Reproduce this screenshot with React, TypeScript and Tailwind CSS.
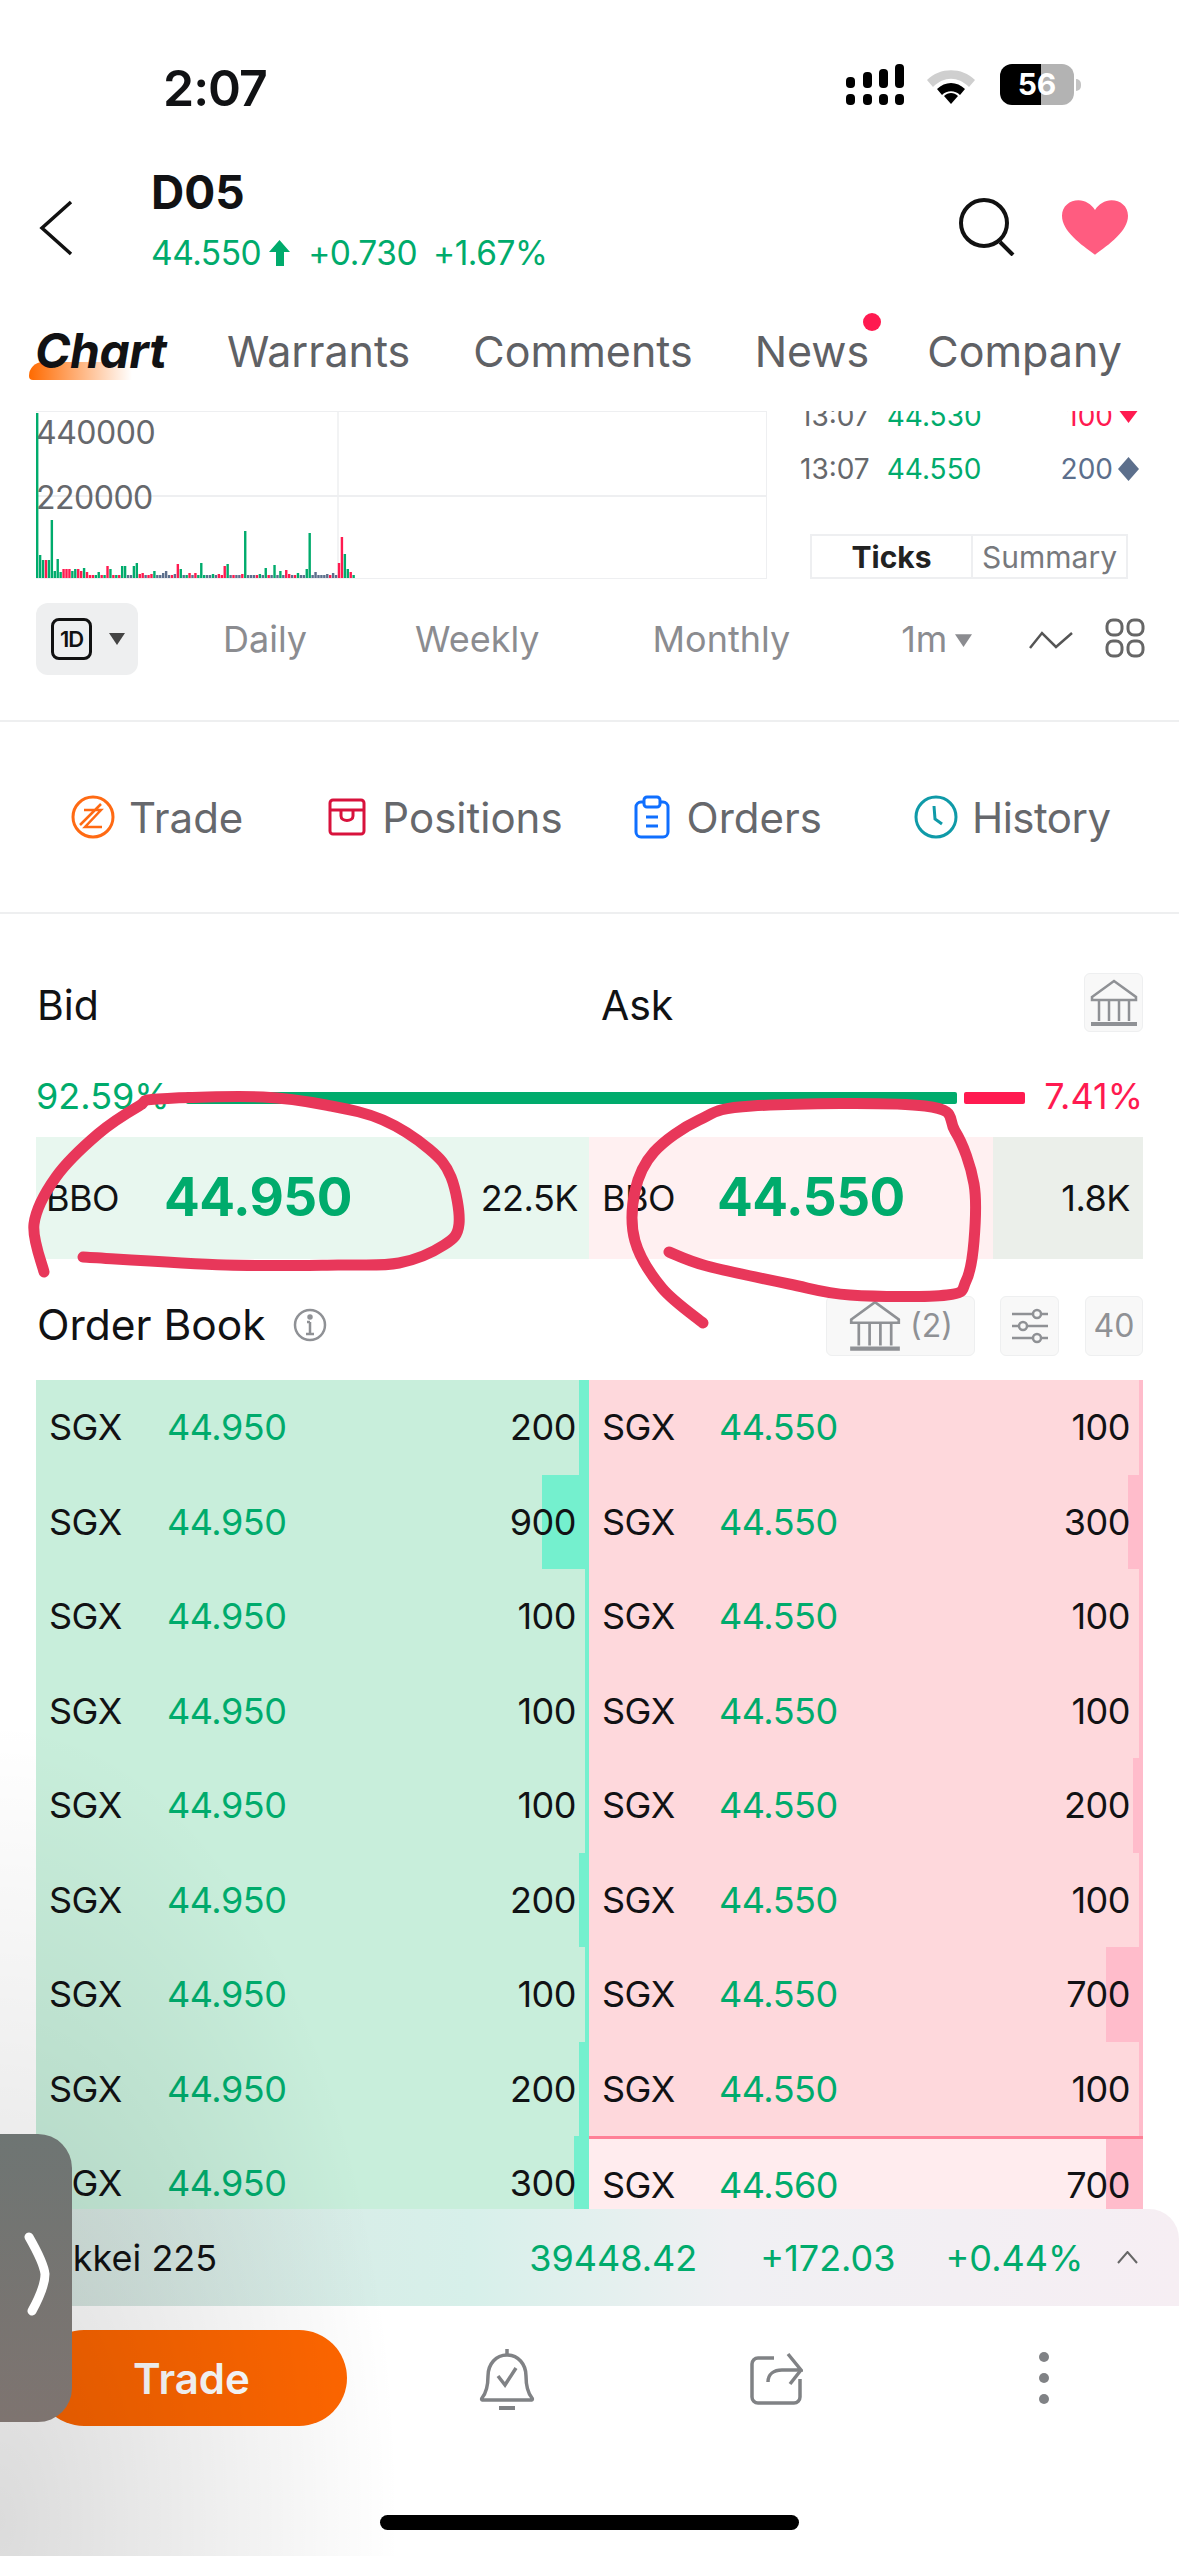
const GREEN = '#00ab6c';
const RED = '#ff1a50';

type Bar = [number, 'g' | 'r' | 's'];

// volume bars, 3px apart starting at the left edge of the chart
const bars: Bar[] = [
  [165, 'g'], [23, 'g'], [18, 'g'], [18, 'r'], [18, 'g'], [58, 'g'], [7, 'g'], [19, 'g'], [6, 'g'], [9, 'r'], [9, 'r'], [9, 'r'],
  [7, 'g'], [9, 'g'], [9, 'r'], [7, 'r'], [10, 'g'], [6, 'r'], [3, 'r'], [3, 'r'], [3, 'g'], [6, 'g'], [3, 'r'], [3, 'g'],
  [12, 'r'], [9, 'g'], [3, 'r'], [3, 'g'], [3, 'r'], [12, 'g'], [12, 'g'], [3, 's'], [3, 's'], [12, 'g'], [15, 'g'], [4, 'r'],
  [5, 'r'], [3, 's'], [3, 'r'], [4, 'r'], [7, 'g'], [3, 's'], [3, 's'], [5, 's'], [7, 's'], [3, 's'], [3, 'r'], [4, 's'],
  [14, 'r'], [9, 'g'], [3, 's'], [3, 'g'], [5, 'r'], [3, 's'], [5, 'r'], [3, 'g'], [15, 'g'], [3, 'g'], [3, 's'], [3, 's'],
  [4, 'g'], [3, 's'], [4, 'r'], [3, 'r'], [12, 'r'], [14, 'g'], [3, 's'], [3, 'r'], [3, 's'], [3, 's'], [4, 'r'], [47, 'g'],
  [3, 's'], [3, 's'], [3, 's'], [3, 'r'], [4, 'g'], [3, 's'], [10, 'g'], [3, 'r'], [3, 's'], [13, 'g'], [3, 's'], [7, 'g'],
  [3, 's'], [8, 'r'], [4, 'r'], [3, 's'], [3, 'r'], [5, 'g'], [3, 's'], [3, 's'], [9, 'g'], [45, 'g'], [3, 's'], [6, 's'], [3, 's'],
  [3, 's'], [3, 's'], [4, 's'], [3, 'r'], [5, 's'], [3, 's'], [15, 'r'], [41, 'r'], [24, 'g'], [9, 'g'], [6, 'r'], [3, 'g'],
];

const barColor = { g: GREEN, r: RED, s: '#5c6f8c' };

const rows = [
  { bidPrice: '44.950', bid: '200', bidBar: 10, askPrice: '44.550', ask: '100', askBar: 4 },
  { bidPrice: '44.950', bid: '900', bidBar: 47, askPrice: '44.550', ask: '300', askBar: 15 },
  { bidPrice: '44.950', bid: '100', bidBar: 4, askPrice: '44.550', ask: '100', askBar: 4 },
  { bidPrice: '44.950', bid: '100', bidBar: 4, askPrice: '44.550', ask: '100', askBar: 4 },
  { bidPrice: '44.950', bid: '100', bidBar: 4, askPrice: '44.550', ask: '200', askBar: 10 },
  { bidPrice: '44.950', bid: '200', bidBar: 10, askPrice: '44.550', ask: '100', askBar: 4 },
  { bidPrice: '44.950', bid: '100', bidBar: 4, askPrice: '44.550', ask: '700', askBar: 37 },
  { bidPrice: '44.950', bid: '200', bidBar: 10, askPrice: '44.550', ask: '100', askBar: 4 },
  { bidPrice: '44.950', bid: '300', bidBar: 15, askPrice: '44.560', ask: '700', askBar: 37 },
];

const leftLoop: [number, number][] = [
  [44, 1272], [34, 1224], [56, 1177], [98, 1134], [139, 1106], [158, 1099], [263, 1097], [331, 1106], [383, 1120],
  [429, 1149], [451, 1177], [459, 1224], [444, 1245], [399, 1263], [338, 1265], [226, 1265], [83, 1257],
];

const rightLoop: [number, number][] = [
  [703, 1323], [662, 1288], [635, 1241], [635, 1191], [654, 1152], [699, 1120], [752, 1106], [925, 1106], [955, 1131],
  [974, 1184], [974, 1241], [966, 1281], [947, 1295], [850, 1295], [789, 1284], [707, 1266], [669, 1252],
];

// catmull-rom through the points of a pen stroke
function smooth(pts: [number, number][]) {
  let d = `M${pts[0][0]} ${pts[0][1]}`;
  for (let i = 0; i < pts.length - 1; i++) {
    const p0 = pts[Math.max(i - 1, 0)];
    const p1 = pts[i];
    const p2 = pts[i + 1];
    const p3 = pts[Math.min(i + 2, pts.length - 1)];
    const c1x = p1[0] + (p2[0] - p0[0]) / 6;
    const c1y = p1[1] + (p2[1] - p0[1]) / 6;
    const c2x = p2[0] - (p3[0] - p1[0]) / 6;
    const c2y = p2[1] - (p3[1] - p1[1]) / 6;
    d += `C${c1x} ${c1y} ${c2x} ${c2y} ${p2[0]} ${p2[1]}`;
  }
  return d;
}

function BankIcon({ className }: { className?: string }) {
  return (
    <svg viewBox="0 0 50 50" fill="none" stroke="#8f9195" strokeWidth="2.5" className={className}>
      <path d="M3 19 25 3l22 16v3H3z" />
      <path d="M10 23v20M20 23v20M30 23v20M40 23v20" />
      <path d="M2 46h46" strokeWidth="4" />
    </svg>
  );
}

function Signal() {
  const cols = [
    { x: 0, top: 13 },
    { x: 17, top: 8 },
    { x: 33, top: 5 },
    { x: 49, top: 0 },
  ];
  return (
    <svg width="58" height="41" viewBox="0 0 58 41">
      {cols.map((c) => (
        <g key={c.x} fill="#000">
          <rect x={c.x} y={c.top} width="9" height={24 - c.top} rx="4" />
          <rect x={c.x} y="30" width="9" height="11" rx="4" />
        </g>
      ))}
    </svg>
  );
}

function Wifi() {
  return (
    <svg width="50" height="38" viewBox="0 0 50 38">
      <path d="M1 14C14 1 36 1 49 14l-6 7C32 10 18 10 7 21z" fill="#cfcfcf" />
      <path d="M11 23c8-8 20-8 28 0l-5 6c-5-5-13-5-18 0z" fill="#000" />
      <path d="m25 38-7-8c4-4 10-4 14 0z" fill="#000" />
    </svg>
  );
}

function Caret({ className }: { className?: string }) {
  return (
    <svg viewBox="0 0 16 12" className={className}>
      <path d="M0 0h16L8 12z" fill="currentColor" />
    </svg>
  );
}

export default function App() {
  return (
    <div
      className="relative w-[1179px] h-[2556px] overflow-hidden bg-white text-[#111214]"
      style={{ fontFamily: 'Inter, "Liberation Sans", sans-serif' }}
    >
      {/* status bar */}
      <div className="h-[150px] pt-[64px] pl-[163px] pr-[98px] flex items-start justify-between">
        <span className="text-[50px] leading-[48px] font-semibold tracking-[-1px]">2:07</span>
        <div className="flex items-center">
          <Signal />
          <div className="ml-[22px]">
            <Wifi />
          </div>
          <div className="ml-[24px] w-[74px] h-[41px] rounded-[12px] bg-[linear-gradient(90deg,#000_0,#000_55%,#b3b3b3_55%,#b3b3b3_100%)] flex items-center justify-center text-white text-[30px] font-bold">
            56
          </div>
          <div className="ml-[2px] w-[5px] h-[12px] rounded-r-full bg-[#c4c4c4]" />
        </div>
      </div>

      {/* header */}
      <div className="h-[140px] flex items-start">
        <svg width="34" height="56" viewBox="0 0 34 56" fill="none" stroke="#111" strokeWidth="3.5" className="ml-[39px] mt-[50px]">
          <path d="M32 2 3 28l29 26" />
        </svg>
        <div className="ml-[78px] mt-[18px]">
          <div className="text-[46px] leading-[48px] font-bold">D05</div>
          <div className="mt-[17px] flex items-center text-[33.5px] leading-[40px] tracking-[-0.5px]" style={{ color: GREEN }}>
            <span>44.550</span>
            <svg width="21" height="26" viewBox="0 0 21 26" className="ml-[8px]">
              <path d="M10.5 0 21 12h-6v14H7V12H0z" fill={GREEN} />
            </svg>
            <span className="ml-[18px]">+0.730</span>
            <span className="ml-[16px]">+1.67%</span>
          </div>
        </div>
        <div className="ml-auto mr-[51px] mt-[48px] flex items-center">
          <svg width="56" height="58" viewBox="0 0 56 58" fill="none" stroke="#111" strokeWidth="4">
            <circle cx="25" cy="25" r="23" />
            <path d="m41 44 13 13" />
          </svg>
          <svg width="66" height="55" viewBox="0 0 68 56" className="ml-[47px]">
            <path
              d="M34 56C20 46 0 32 0 16 0 6 8 0 17 0c7 0 13 4 17 10C38 4 44 0 51 0c9 0 17 6 17 16 0 16-20 30-34 40z"
              fill="#ff5c80"
            />
          </svg>
        </div>
      </div>

      {/* tabs */}
      <div className="relative h-[121px] pt-[35px] pl-[35px] flex items-start text-[43px] leading-[52px] text-[#5f6165]">
        <div className="relative w-[192px]">
          <div className="absolute left-[-6px] top-[37px] w-[103px] h-[18px] rounded-tl-[14px] rounded-bl-[4px] bg-[linear-gradient(90deg,#ff6a00,rgba(255,106,0,0))]" />
          <span className="relative text-[#111214] text-[48px] font-bold italic tracking-[-0.5px]">Chart</span>
        </div>
        <span>Warrants</span>
        <span className="ml-[63px]">Comments</span>
        <span className="relative ml-[62px]">
          News
          <span className="absolute left-[108px] top-[-12px] w-[18px] h-[18px] rounded-full" style={{ backgroundColor: RED }} />
        </span>
        <span className="ml-[58px]">Company</span>
      </div>

      {/* chart and ticks */}
      <div className="h-[168px] flex">
        <div className="relative ml-[36px] w-[731px] h-[168px] border border-l-0 border-[#eeeff1]">
          <div className="absolute left-[301px] top-0 bottom-0 w-[2px] bg-[#f2f3f4]" />
          <div className="absolute left-0 right-0 top-[83px] h-[2px] bg-[#eeeff1]" />
          <span className="absolute left-0 top-[3px] text-[32px] leading-[36px] text-[#66686c] tracking-[-0.5px]">440000</span>
          <span className="absolute left-0 top-[68px] text-[32px] leading-[36px] text-[#66686c] tracking-[-0.5px]">220000</span>
          <svg width="330" height="168" className="absolute left-0 top-0">
            {bars.map(([h, c], i) => (
              <rect key={i} x={i * 2.93} y={166 - h} width="2.4" height={h} fill={barColor[c]} />
            ))}
          </svg>
        </div>
        <div className="relative ml-[33px] w-[346px] h-[168px] overflow-hidden text-[28px] leading-[36px]">
          <div className="absolute top-[-13px] left-0 w-[339px] flex">
            <span className="text-[#66686c]">13:07</span>
            <span className="ml-[17px]" style={{ color: GREEN }}>44.530</span>
            <span className="ml-auto" style={{ color: RED }}>100</span>
            <svg width="21" height="14" viewBox="0 0 21 14" className="ml-[5px] mt-[11px]">
              <path d="M0 0h21L10.5 14z" fill={RED} />
            </svg>
          </div>
          <div className="absolute top-[40px] left-0 w-[339px] flex">
            <span className="text-[#66686c]">13:07</span>
            <span className="ml-[17px]" style={{ color: GREEN }}>44.550</span>
            <span className="ml-auto text-[#5c6f8c]">200</span>
            <svg width="21" height="24" viewBox="0 0 21 24" className="ml-[5px] mt-[6px]">
              <path d="M10.5 0 21 12 10.5 24 0 12z" fill="#5c6f8c" />
            </svg>
          </div>
          <div className="absolute left-[10px] top-[123px] w-[318px] h-[45px] border-2 border-[#eeeff1] flex items-center text-[30px]">
            <span className="w-[159px] text-center font-bold text-[#222]">Ticks</span>
            <span className="flex-1 h-full flex items-center justify-center border-l-2 border-[#eeeff1] text-[#77797d] text-[30px]">Summary</span>
          </div>
        </div>
      </div>

      {/* interval toolbar */}
      <div className="h-[143px] border-b-2 border-[#eeeff0] pt-[24px] pl-[36px] flex items-start text-[36px] leading-[72px] text-[#8b8c90]">
        <div className="w-[102px] h-[72px] rounded-[12px] bg-[#eeeff0] flex items-center pl-[15px]">
          <div className="w-[41px] h-[42px] rounded-[8px] border-[3px] border-[#111] flex items-center justify-center text-[22px] leading-none font-semibold text-[#111] tracking-[-1px]">
            1D
          </div>
          <Caret className="ml-[17px] w-[16px] h-[12px] text-[#444]" />
        </div>
        <span className="ml-[85px]">Daily</span>
        <span className="ml-[108px]">Weekly</span>
        <span className="ml-[113px]">Monthly</span>
        <span className="ml-[111px]">1m</span>
        <Caret className="ml-[8px] mt-[31px] w-[17px] h-[13px] text-[#8b8c90]" />
        <svg width="44" height="18" viewBox="0 0 44 18" fill="none" stroke="#555" strokeWidth="2.5" className="ml-[57px] mt-[28px]">
          <path d="M1 17 13 2l14 14L43 2" />
        </svg>
        <svg width="40" height="40" viewBox="0 0 40 40" fill="none" stroke="#666" strokeWidth="3" className="ml-[32px] mt-[15px]">
          <rect x="2" y="2" width="15" height="15" rx="6" />
          <rect x="23" y="2" width="15" height="15" rx="6" />
          <rect x="2" y="23" width="15" height="15" rx="6" />
          <rect x="23" y="23" width="15" height="15" rx="6" />
        </svg>
      </div>

      {/* trade shortcuts */}
      <div className="h-[192px] border-b-2 border-[#eeeff0] flex items-center pl-[71px] text-[42px] text-[#66686c]">
        <svg width="44" height="44" viewBox="0 0 44 44" fill="none" stroke="#ff6a13" strokeWidth="3">
          <circle cx="22" cy="22" r="20" />
          <path d="M13 15h17L14 32h17M9 30 30 9" strokeWidth="2.5" />
        </svg>
        <span className="ml-[14px]">Trade</span>
        <svg width="38" height="38" viewBox="0 0 38 38" fill="none" stroke="#d8123c" strokeWidth="3" className="ml-[85px]">
          <rect x="2" y="2" width="34" height="34" rx="3" />
          <path d="M2 12h34M13 12v6c0 6 12 6 12 0v-6" />
        </svg>
        <span className="ml-[16px]">Positions</span>
        <svg width="36" height="44" viewBox="0 0 36 44" fill="none" stroke="#0f6fff" strokeWidth="3" className="ml-[71px]">
          <rect x="2" y="7" width="32" height="35" rx="5" />
          <rect x="10" y="2" width="16" height="10" rx="3" fill="#fff" />
          <path d="M12 22h12M12 31h12" />
        </svg>
        <span className="ml-[17px]">Orders</span>
        <svg width="44" height="44" viewBox="0 0 44 44" fill="none" stroke="#0f9aa8" strokeWidth="3" className="ml-[92px]">
          <circle cx="22" cy="22" r="20" />
          <path d="m20 11 1 13 7 5" />
        </svg>
        <span className="ml-[14px] tracking-[-0.5px]">History</span>
      </div>

      {/* bid / ask */}
      <div className="px-[36px]">
        <div className="h-[122px] flex items-start pt-[59px] text-[41px] leading-[64px]">
          <span className="ml-[1px]">Bid</span>
          <span className="ml-[502px]">Ask</span>
          <div className="ml-auto w-[59px] h-[59px] rounded-[6px] border border-[#eeeff0] bg-[#f8f8f8] flex items-center justify-center">
            <BankIcon className="w-[50px] h-[50px]" />
          </div>
        </div>
        <div className="h-[101px] flex items-start text-[36px] leading-[44px] pt-[38px]">
          <span className="w-[150px]" style={{ color: GREEN }}>92.59%</span>
          <div className="mt-[18px] w-[771px] h-[12px] rounded-[2px]" style={{ backgroundColor: GREEN }} />
          <div className="mt-[18px] ml-[7px] w-[61px] h-[12px] rounded-[2px]" style={{ backgroundColor: RED }} />
          <span className="ml-auto" style={{ color: RED }}>7.41%</span>
        </div>
        <div className="h-[122px] flex items-center text-[36px] tracking-[-0.5px]">
          <div className="w-[553px] h-full bg-[#e8f7ef] flex items-center pl-[10px] pr-[11px]">
            <span className="w-[118px]">BBO</span>
            <span className="text-[53px] font-bold" style={{ color: GREEN }}>44.950</span>
            <span className="ml-auto">22.5K</span>
          </div>
          <div className="w-[404px] h-full bg-[#fff0f1] flex items-center pl-[13px]">
            <span className="w-[115px]">BBO</span>
            <span className="text-[53px] font-bold" style={{ color: GREEN }}>44.550</span>
          </div>
          <div className="flex-1 h-full bg-[#ebefea] flex items-center justify-end pr-[13px]">1.8K</div>
        </div>

        {/* order book header */}
        <div className="h-[121px] flex items-start pt-[37px]">
          <span className="ml-[1px] text-[42.5px] leading-[58px]">Order Book</span>
          <svg width="34" height="34" viewBox="0 0 34 34" fill="none" stroke="#8f9195" strokeWidth="2.5" className="ml-[27px] mt-[12px]">
            <circle cx="17" cy="17" r="15" />
            <path d="M17 14v11M13 26h8M14 14h3" />
            <circle cx="17" cy="9" r="1.5" fill="#8f9195" />
          </svg>
          <div className="ml-auto w-[149px] h-[60px] rounded-[6px] border border-[#eeeff0] bg-[#f8f8f8] flex items-center justify-center text-[32px] text-[#8f9195]">
            <BankIcon className="w-[54px] h-[54px]" />
            <span className="ml-[8px]">(2)</span>
          </div>
          <div className="ml-[25px] w-[59px] h-[60px] rounded-[6px] border border-[#eeeff0] bg-[#f8f8f8] flex items-center justify-center">
            <svg width="38" height="38" viewBox="0 0 38 38" fill="none" stroke="#8f9195" strokeWidth="2.5">
              <path d="M1 7h36M1 19h36M1 31h36" />
              <circle cx="26" cy="7" r="4" fill="#f8f8f8" />
              <circle cx="12" cy="19" r="4" fill="#f8f8f8" />
              <circle cx="26" cy="31" r="4" fill="#f8f8f8" />
            </svg>
          </div>
          <div className="ml-[26px] w-[58px] h-[60px] rounded-[6px] border border-[#eeeff0] bg-[#f8f8f8] flex items-center justify-center text-[32px] text-[#8f9195]">
            40
          </div>
        </div>

        {/* order book rows */}
        <div className="h-[829px] overflow-hidden text-[36px] tracking-[-0.5px]">
          {rows.map((row, i) => (
            <div key={i} className="flex h-[94.5px]">
              <div className="relative w-[553px] bg-[#c8eedb] flex items-center pl-[13px] pr-[13px]">
                <div className="absolute right-0 top-0 bottom-0 bg-[#74f0ce]" style={{ width: row.bidBar }} />
                <span className="relative w-[118px]">SGX</span>
                <span className="relative" style={{ color: GREEN }}>{row.bidPrice}</span>
                <span className="relative ml-auto">{row.bid}</span>
              </div>
              <div
                className={
                  i === 8
                    ? 'relative flex-1 bg-[#ffecee] flex items-center pl-[13px] pr-[13px] border-t-[3px] border-[#ff8097]'
                    : 'relative flex-1 bg-[#fed8dc] flex items-center pl-[13px] pr-[13px]'
                }
              >
                <div className="absolute right-0 top-0 bottom-0 bg-[#ffbccb]" style={{ width: row.askBar }} />
                <span className="relative w-[117px]">SGX</span>
                <span className="relative" style={{ color: GREEN }}>{row.askPrice}</span>
                <span className="relative ml-auto">{row.ask}</span>
              </div>
            </div>
          ))}
        </div>
      </div>

      {/* index ticker */}
      <div className="h-[97px] rounded-tr-[30px] bg-[linear-gradient(90deg,#d8e6e1_0%,#d7f0ea_40%,#f0f0f3_62%,#f6eef3_100%)] flex items-center pl-[37px] text-[36px]">
        <span>Nikkei 225</span>
        <span className="ml-[312px]" style={{ color: GREEN }}>39448.42</span>
        <span className="ml-[63px]" style={{ color: GREEN }}>+172.03</span>
        <span className="ml-[50px]" style={{ color: GREEN }}>+0.44%</span>
        <svg width="21" height="13" viewBox="0 0 21 13" fill="none" stroke="#666" strokeWidth="2" className="ml-[34px]">
          <path d="m1 12 9.5-11L20 12" />
        </svg>
      </div>

      {/* bottom actions */}
      <div className="h-[209px] pt-[24px] flex items-start">
        <div className="ml-[36px] w-[311px] h-[96px] rounded-[48px] bg-[#ff6600] flex items-center justify-center text-white text-[42px] font-semibold">
          Trade
        </div>
        <svg width="56" height="62" viewBox="0 0 56 62" fill="none" stroke="#808285" strokeWidth="3.5" className="ml-[132px] mt-[18px]">
          <path d="M28 1v6" />
          <path d="M3 50c5-6 6-14 6-22 0-12 8-21 19-21s19 9 19 21c0 8 1 16 6 22 1 2 0 2-2 2H5c-2 0-3 0-2-2z" />
          <path d="m19 28 7 9 11-17" />
          <path d="M20 60h16" strokeWidth="4" />
        </svg>
        <svg width="53" height="53" viewBox="0 0 53 53" fill="none" stroke="#808285" strokeWidth="3.5" className="ml-[215px] mt-[22px]">
          <path d="M24 6H8a6 6 0 0 0-6 6v33a6 6 0 0 0 6 6h36a6 6 0 0 0 6-6V27" />
          <path d="M18 30c0-8 6-12 14-12h19L38 2" />
          <path d="M51 18 40 32" />
        </svg>
        <div className="ml-[236px] mt-[22px] flex flex-col gap-[11px]">
          <div className="w-[10px] h-[10px] rounded-full bg-[#808285]" />
          <div className="w-[10px] h-[10px] rounded-full bg-[#808285]" />
          <div className="w-[10px] h-[10px] rounded-full bg-[#808285]" />
        </div>
      </div>
      <div className="ml-[380px] w-[419px] h-[15px] rounded-full bg-black" />

      {/* shadow in the lower left corner */}
      <div className="absolute inset-0 pointer-events-none bg-[radial-gradient(ellipse_400px_800px_at_0px_2520px,rgba(0,0,0,0.14),rgba(0,0,0,0)_100%)]" />

      {/* hand drawn marks on the screenshot */}
      <svg width="1179" height="2556" fill="none" stroke="#e8375a" strokeWidth="11" strokeLinecap="round" strokeLinejoin="round" className="absolute left-0 top-0 pointer-events-none">
        <path d={smooth(leftLoop)} />
        <path d={smooth(rightLoop)} />
      </svg>

      {/* assistive handle */}
      <div className="absolute left-0 top-[2134px] w-[72px] h-[288px] rounded-r-[34px] bg-[linear-gradient(180deg,#6e7573,#7e7470)] flex items-center justify-start">
        <svg width="26" height="84" viewBox="0 0 26 84" fill="none" stroke="#fff" strokeWidth="9" strokeLinecap="round" className="ml-[24px] mt-[-8px]">
          <path d="M5 5c8 14 15 28 16 37 0 10-7 26-13 37" />
        </svg>
      </div>
    </div>
  );
}
